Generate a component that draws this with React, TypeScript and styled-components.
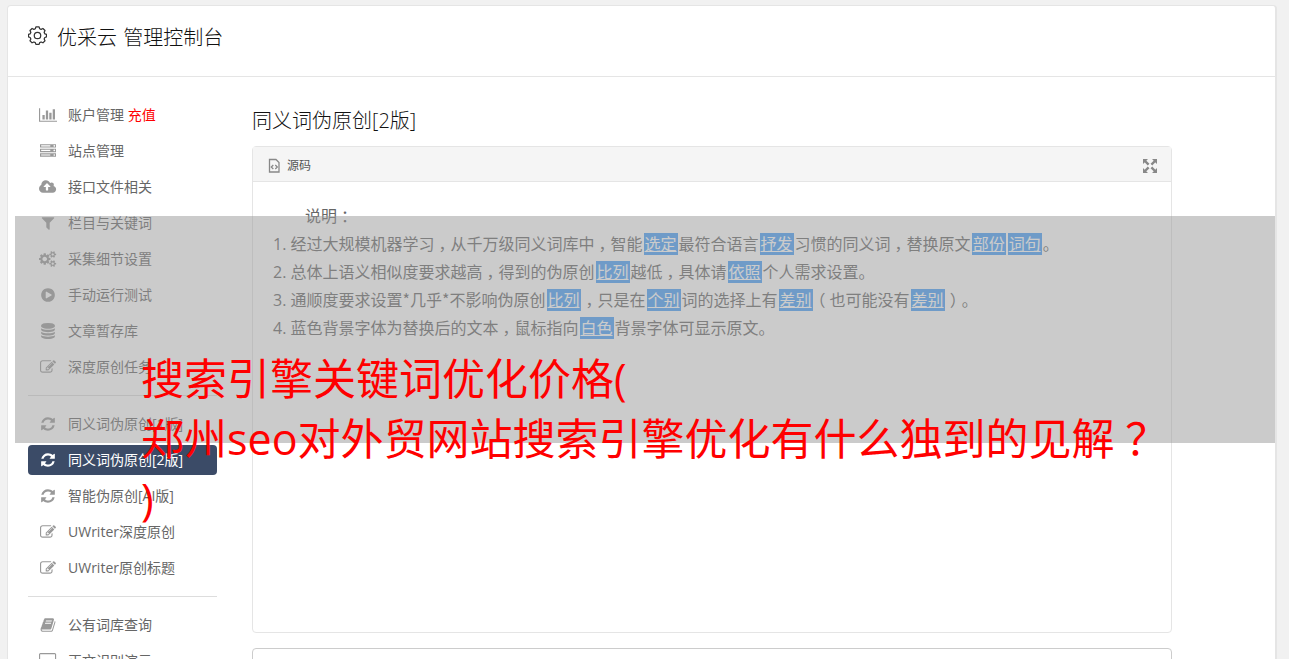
import type { ReactNode } from "react";
import styled, { createGlobalStyle } from "styled-components";

interface MenuEntry {
  label: string;
  icon: IconName;
  extra?: string;
  active?: boolean;
}

const icons = {
  chart: {
    width: 2048,
    d: "M640 896v512h-256v-512h256zm384-512v1024h-256v-1024h256zm1024 1152v128h-2048v-1536h128v1408h1920zm-640-896v768h-256v-768h256zm384-384v1152h-256v-1152h256z",
  },
  server: {
    width: 1792,
    d: "M128 1408h1024v-128h-1024v128zm0-512h1024v-128h-1024v128zm1568 448q0-40-28-68t-68-28-68 28-28 68 28 68 68 28 68-28 28-68zm-1568-960h1024v-128h-1024v128zm1568 448q0-40-28-68t-68-28-68 28-28 68 28 68 68 28 68-28 28-68zm0-512q0-40-28-68t-68-28-68 28-28 68 28 68 68 28 68-28 28-68zm96 832v384h-1792v-384h1792zm0-512v384h-1792v-384h1792zm0-512v384h-1792v-384h1792z",
  },
  cloud: {
    width: 1920,
    d: "M1280 864q0-14-9-23l-352-352q-9-9-23-9t-23 9l-351 351q-10 12-10 24 0 14 9 23t23 9h224v352q0 13 9.5 22.5t22.5 9.5h192q13 0 22.5-9.5t9.5-22.5v-352h224q13 0 22.5-9.5t9.5-22.5zm640 288q0 159-112.5 271.5t-271.5 112.5h-1088q-185 0-316.5-131.5t-131.5-316.5q0-130 70-240t188-165q-2-30-2-43 0-212 150-362t362-150q156 0 285.5 87t188.5 231q71-62 166-62 106 0 181 75t75 181q0 76-41 138 130 31 213.5 135.5t83.5 238.5z",
  },
  filter: {
    width: 1792,
    d: "M1595 295q17 41-14 70l-493 493v742q0 42-39 59-13 5-25 5-27 0-45-19l-256-256q-19-19-19-45v-486l-493-493q-31-29-14-70 17-39 59-39h1280q42 0 59 39z",
  },
  cogs: {
    width: 1920,
    d: "M896 896q0-106-75-181t-181-75-181 75-75 181 75 181 181 75 181-75 75-181zm768 512q0-52-38-90t-90-38-90 38-38 90q0 53 37.5 90.5t90.5 37.5 90.5-37.5 37.5-90.5zm0-1024q0-52-38-90t-90-38-90 38-38 90q0 53 37.5 90.5t90.5 37.5 90.5-37.5 37.5-90.5zm-384 421v185q0 10-7 19.5t-16 10.5l-155 24q-11 35-32 76 34 48 90 115 7 10 7 20 0 12-7 19-23 30-82.5 89.5t-78.5 59.5q-11 0-21-7l-115-90q-37 19-77 31-11 108-23 155-7 24-30 24h-186q-11 0-20-7.5t-10-17.5l-23-153q-34-10-75-31l-118 89q-7 7-20 7-11 0-21-8-144-133-144-160 0-9 7-19 10-14 41-53t47-61q-23-44-35-82l-152-24q-10-1-17-9.5t-7-19.5v-185q0-10 7-19.5t16-10.5l155-24q11-35 32-76-34-48-90-115-7-11-7-20 0-12 7-20 22-30 82-89t79-59q11 0 21 7l115 90q34-18 77-32 11-108 23-154 7-24 30-24h186q11 0 20 7.5t10 17.5l23 153q34 10 75 31l118-89q8-7 20-7 11 0 21 8 144 133 144 160 0 9-7 19-12 16-42 54t-45 60q23 48 34 82l152 23q10 2 17 10.5t7 19.5zm640 533v140q0 16-149 31-12 27-30 52 51 113 51 138 0 4-4 7-122 71-124 71-8 0-46-47t-52-68q-20 2-30 2t-30-2q-14 21-52 68t-46 47q-2 0-124-71-4-3-4-7 0-25 51-138-18-25-30-52-149-15-149-31v-140q0-16 149-31 13-29 30-52-51-113-51-138 0-4 4-7 4-2 35-20t59-34 30-16q8 0 46 46.5t52 67.5q20-2 30-2t30 2q51-71 92-112l6-2q4 0 124 70 4 3 4 7 0 25-51 138 17 23 30 52 149 15 149 31zm0-1024v140q0 16-149 31-12 27-30 52 51 113 51 138 0 4-4 7-122 71-124 71-8 0-46-47t-52-68q-20 2-30 2t-30-2q-14 21-52 68t-46 47q-2 0-124-71-4-3-4-7 0-25 51-138-18-25-30-52-149-15-149-31v-140q0-16 149-31 13-29 30-52-51-113-51-138 0-4 4-7 4-2 35-20t59-34 30-16q8 0 46 46.5t52 67.5q20-2 30-2t30 2q51-71 92-112l6-2q4 0 124 70 4 3 4 7 0 25-51 138 17 23 30 52 149 15 149 31z",
  },
  play: {
    width: 1792,
    d: "M896 128q209 0 385.5 103t279.5 279.5 103 385.5-103 385.5-279.5 279.5-385.5 103-385.5-103-279.5-279.5-103-385.5 103-385.5 279.5-279.5 385.5-103zm384 823q32-18 32-55t-32-55l-544-320q-31-19-64-1-32 19-32 56v640q0 37 32 56 16 8 32 8 17 0 32-9z",
  },
  database: {
    width: 1792,
    d: "M896 768q237 0 443-43t325-127v170q0 69-103 128t-280 93.5-385 34.5-385-34.5-280-93.5-103-128v-170q119 84 325 127t443 43zm0 768q237 0 443-43t325-127v170q0 69-103 128t-280 93.5-385 34.5-385-34.5-280-93.5-103-128v-170q119 84 325 127t443 43zm0-384q237 0 443-43t325-127v170q0 69-103 128t-280 93.5-385 34.5-385-34.5-280-93.5-103-128v-170q119 84 325 127t443 43zm0-1152q208 0 385 34.5t280 93.5 103 128v128q0 69-103 128t-280 93.5-385 34.5-385-34.5-280-93.5-103-128v-128q0-69 103-128t280-93.5 385-34.5z",
  },
  edit: {
    width: 1792,
    d: "M888 1184l116-116-152-152-116 116v56h96v96h56zm440-720q-16-16-33 1l-350 350q-17 17-1 33t33-1l350-350q17-17 1-33zm80 594v190q0 119-84.5 203.5t-203.5 84.5h-832q-119 0-203.5-84.5t-84.5-203.5v-832q0-119 84.5-203.5t203.5-84.5h832q63 0 117 25 15 7 18 23 3 17-9 29l-49 49q-14 14-32 8-23-6-45-6h-832q-66 0-113 47t-47 113v832q0 66 47 113t113 47h832q66 0 113-47t47-113v-126q0-13 9-22l64-64q15-15 35-7t20 29zm-96-738l288 288-672 672h-288v-288zm444 132l-92 92-288-288 92-92q28-28 68-28t68 28l152 152q28 28 28 68t-28 68z",
  },
  refresh: {
    width: 1792,
    d: "M1639 1056q0 5-1 7-64 268-268 434.5t-478 166.5q-146 0-282.5-55t-243.5-157l-129 129q-19 19-45 19t-45-19-19-45v-448q0-26 19-45t45-19h448q26 0 45 19t19 45-19 45l-137 137q71 66 161 102t187 36q134 0 250-65t186-179q11-17 53-117 8-23 30-23h192q13 0 22.5 9.5t9.5 22.5zm25-800v448q0 26-19 45t-45 19h-448q-26 0-45-19t-19-45 19-45l138-138q-148-137-349-137-134 0-250 65t-186 179q-11 17-53 117-8 23-30 23h-199q-13 0-22.5-9.5t-9.5-22.5v-7q65-268 270-434.5t480-166.5q146 0 284 55.5t245 156.5l130-129q19-19 45-19t45 19 19 45z",
  },
  book: {
    width: 1792,
    d: "M1703 478q40 57 18 129l-275 906q-19 64-76.5 107.5t-122.5 43.5h-923q-77 0-148.5-53.5t-99.5-131.5q-24-67-2-127 0-4 3-27t4-37q1-8-3-21.5t-3-19.5q2-11 8-21t16.5-23.5 16.5-23.5q23-38 45-91.5t30-91.5q3-10 .5-30t-.5-28q3-11 17-28t17-23q21-36 42-92t25-90q1-9-2.5-32t.5-28q4-13 22-30.5t22-22.5q19-26 42.5-84.5t27.5-96.5q1-8-3-25.5t-2-26.5q2-8 9-18t18-23 17-21q8-12 16.5-30.5t15-35 16-36 19.5-32 26.5-23.5 36-11.5 47.5 5.5l-1 3q38-9 51-9h761q74 0 114 56t18 130l-274 906q-36 119-71.5 153.5t-128.5 34.5h-869q-27 0-38 15-11 16-1 43 24 70 144 70h923q29 0 56-15.5t35-41.5l300-987q7-22 5-57 38 15 59 43zm-1064 2q-4 13 2 22.5t20 9.5h608q13 0 25.5-9.5t16.5-22.5l21-64q4-13-2-22.5t-20-9.5h-608q-13 0-25.5 9.5t-16.5 22.5zm-83 256q-4 13 2 22.5t20 9.5h608q13 0 25.5-9.5t16.5-22.5l21-64q4-13-2-22.5t-20-9.5h-608q-13 0-25.5 9.5t-16.5 22.5z",
  },
  desktop: {
    width: 1920,
    d: "M1792 992v-832q0-13-9.5-22.5t-22.5-9.5h-1600q-13 0-22.5 9.5t-9.5 22.5v832q0 13 9.5 22.5t22.5 9.5h1600q13 0 22.5-9.5t9.5-22.5zm128-832v1088q0 66-47 113t-113 47h-544q0 37 16 77.5t32 71 16 43.5q0 26-19 45t-45 19h-512q-26 0-45-19t-19-45q0-14 16-44t32-70 16-78h-544q-66 0-113-47t-47-113v-1088q0-66 47-113t113-47h1600q66 0 113 47t47 113z",
  },
};

type IconName = keyof typeof icons;

const menu: MenuEntry[][] = [
  [
    { label: "账户管理", icon: "chart", extra: "充值" },
    { label: "站点管理", icon: "server" },
    { label: "接口文件相关", icon: "cloud" },
    { label: "栏目与关键词", icon: "filter" },
    { label: "采集细节设置", icon: "cogs" },
    { label: "手动运行测试", icon: "play" },
    { label: "文章暂存库", icon: "database" },
    { label: "深度原创任务", icon: "edit" },
  ],
  [
    { label: "同义词伪原创[1版]", icon: "refresh" },
    { label: "同义词伪原创[2版]", icon: "refresh", active: true },
    { label: "智能伪原创[AI版]", icon: "refresh" },
    { label: "UWriter深度原创", icon: "edit" },
    { label: "UWriter原创标题", icon: "edit" },
  ],
  [
    { label: "公有词库查询", icon: "book" },
    { label: "正文识别演示", icon: "desktop" },
  ],
];

function MenuIcon({ name }: { name: IconName }) {
  const { width, d } = icons[name];
  return (
    <svg
      width={(width / 1792) * 16}
      height="16"
      viewBox={`0 0 ${width} 1792`}
      fill="currentColor"
    >
      <path d={d} />
    </svg>
  );
}

function GearIcon() {
  return (
    <svg width="19" height="19" viewBox="0 0 20 20" fill="none" stroke="#333">
      <path
        strokeWidth="1.3"
        strokeLinejoin="round"
        d="M8.3 1h3.4l.6 1.900 1.500.6 1.900-.9 2.200 2.200-.9 1.900.7 1.500 1.800.6v2.700l-1.800.6-.7 1.600.9 1.800-2.200 2.200-1.900-.9-1.500.7-.6 1.800H8.300l-.6-1.800-1.500-.7-1.900.9-2.200-2.200.9-1.800-.7-1.600-1.800-.6V8.800l1.800-.6.7-1.500-.9-1.900 2.200-2.200 1.900.9 1.500-.6z"
      />
      <circle cx="10" cy="10" r="3.400" strokeWidth="1.300" />
    </svg>
  );
}

function SourceIcon() {
  return (
    <svg width="12" height="15" viewBox="0 0 12 15" fill="none" stroke="#888">
      <path d="M1.500 1.500h6.500l3 3v9.500H1.500z" strokeWidth="1.300" />
      <path d="M5.300 7l-2 2 2 2M7.300 7l2 2-2 2" strokeWidth="1.300" />
    </svg>
  );
}

function ExpandIcon() {
  return (
    <svg width="14" height="14" viewBox="0 0 14 14" fill="#888" stroke="#888">
      <path
        stroke="none"
        d="M0 0h5L0 5zM14 0v5L9 0zM0 14V9l5 5zM14 14H9l5-5z"
      />
      <path
        strokeWidth="2.400"
        d="M2 2l3.600 3.600M12 2L8.400 5.600M2 12l3.600-3.600M12 12L8.400 8.400"
      />
    </svg>
  );
}

function Word({ children }: { children: ReactNode }) {
  return <Replaced href="#">{children}</Replaced>;
}

export default function App() {
  return (
    <>
      <GlobalStyle />
      <Page>
        <Header>
          <GearIcon />
          <Title>优采云 管理控制台</Title>
        </Header>
        <Body>
          <Sidebar>
            {menu.map((group, index) => (
              <MenuGroup key={index}>
                {group.map((entry) => (
                  <MenuItem key={entry.label} $active={entry.active}>
                    <IconSlot>
                      <MenuIcon name={entry.icon} />
                    </IconSlot>
                    <Label>
                      {entry.label} {entry.extra && <Extra>{entry.extra}</Extra>}
                    </Label>
                  </MenuItem>
                ))}
              </MenuGroup>
            ))}
          </Sidebar>
          <Main>
            <Heading>同义词伪原创[2版]</Heading>
            <Editor>
              <Toolbar>
                <SourceButton>
                  <SourceIcon />
                  <Label>源码</Label>
                </SourceButton>
                <ExpandIcon />
              </Toolbar>
              <Content>
                <Intro>
                  说明<Mark $shift={0.25}>：</Mark>
                </Intro>
                <Line>
                  1. 经过大规模机器学习<Mark $shift={0.25}>，</Mark>
                  从千万级同义词库中<Mark $shift={0.25}>，</Mark>智能
                  <Word>选定</Word>
                  最符合语言<Word>抒发</Word>习惯的同义词
                  <Mark $shift={0.25}>，</Mark>替换原文
                  <Word>部份</Word>
                  <Word>词句</Word>。
                </Line>
                <Line>
                  2. 总体上语义相似度要求越高<Mark $shift={0.25}>，</Mark>
                  得到的伪原创<Word>比列</Word>
                  越低<Mark $shift={0.25}>，</Mark>具体请<Word>依照</Word>
                  个人需求设置。
                </Line>
                <Line>
                  3. 通顺度要求设置<Star>*</Star>几乎<Star>*</Star>
                  不影响伪原创<Word>比列</Word>
                  <Mark $shift={0.25}>，</Mark>只是在<Word>个别</Word>
                  词的选择上有<Word>差别</Word>
                  <Mark $shift={-0.25}>（</Mark>也可能没有<Word>差别</Word>
                  <Mark $shift={0.25}>）</Mark>。
                </Line>
                <Line>
                  4. 蓝色背景字体为替换后的文本
                  <Mark $shift={0.25}>，</Mark>鼠标指向<Word>白色</Word>
                  背景字体可显示原文。
                </Line>
              </Content>
            </Editor>
            <Output />
          </Main>
        </Body>
        <Shade />
        <Caption>
          搜索引擎关键词优化价格(
          <br />
          郑州seo对外贸网站搜索引擎优化有什么独到的见解
          <Mark $shift={0.25}>？</Mark>
          <br />)
        </Caption>
      </Page>
    </>
  );
}

const GlobalStyle = createGlobalStyle`
  * {
    box-sizing: border-box;
  }

  body {
    margin: 0;
    height: 659px;
    overflow: hidden;
    background: #f1f1f1;
    color: #333;
    font-family: "Open Sans", "Noto Sans CJK SC", sans-serif;
    font-weight: 400;
  }
`;

const Page = styled.div`
  position: relative;
  width: 1270px;
  height: 654px;
  margin: 5px 0 0 7px;
  overflow: hidden;
  background: #fff;
  border: 1px solid #e5e5e5;
  border-right-width: 2px;
  border-bottom: none;
  border-radius: 4px 4px 0 0;
`;

const Header = styled.header`
  display: flex;
  align-items: flex-start;
  gap: 10px;
  height: 71px;
  padding: 20px 0 0 20px;
  border-bottom: 1px solid #e5e5e5;
`;

const Title = styled.h1`
  margin: -3px 0 0;
  font-size: 20px;
  font-weight: 300;
  line-height: 30px;
  word-spacing: 1px;
  color: #111;
`;

const Body = styled.div`
  display: flex;
  gap: 35px;
  padding: 23px 0 0 20px;
`;

const Sidebar = styled.nav`
  width: 189px;
`;

const MenuGroup = styled.div`
  display: flex;
  flex-direction: column;
  gap: 6px;

  & + & {
    margin-top: 13px;
    padding-top: 13px;
    border-top: 1px solid #ddd;
  }
`;

const MenuItem = styled.a<{ $active?: boolean }>`
  display: flex;
  align-items: center;
  height: 30px;
  padding-left: 10px;
  border-radius: 4px;
  background: ${({ $active }) => ($active ? "#3b4b67" : "transparent")};
  color: ${({ $active }) => ($active ? "#fff" : "#666")};
  font-size: 14px;
  white-space: nowrap;

  svg {
    color: ${({ $active }) => ($active ? "#fff" : "#999")};
  }
`;

const IconSlot = styled.span`
  display: flex;
  justify-content: center;
  width: 20px;
  margin-right: 10px;
`;

const Label = styled.span`
  padding-bottom: 2px;
`;

const Extra = styled.span`
  color: #f00;
`;

const Main = styled.main`
  width: 920px;
`;

const Heading = styled.h2`
  margin: 5px 0 10px;
  font-size: 20px;
  font-weight: 300;
  line-height: 31px;
  color: #111;
`;

const Editor = styled.section`
  height: 487px;
  border: 1px solid #e5e5e5;
  border-radius: 4px;
`;

const Toolbar = styled.div`
  display: flex;
  align-items: center;
  justify-content: space-between;
  height: 35px;
  padding: 3px 14px 0 15px;
  background: #f5f5f5;
  border-bottom: 1px solid #e5e5e5;
`;

const SourceButton = styled.span`
  display: flex;
  align-items: center;
  gap: 7px;
  color: #555;
  font-size: 12px;
`;

const Content = styled.div`
  padding: 20px;
  color: #666;
  font-size: 16px;
  line-height: 28px;
`;

const Intro = styled.p`
  margin: 0;
  text-indent: 2em;
`;

const Line = styled.p`
  margin: 0;
  white-space: nowrap;
`;

// full-width punctuation, moved toward the middle of its cell
const Mark = styled.span<{ $shift: number }>`
  display: inline-block;
  width: 1em;
  text-indent: ${({ $shift }) => $shift}em;
`;

const Star = styled.span`
  font-family: "Noto Sans CJK SC", sans-serif;
  line-height: 1;
`;

const Replaced = styled.a`
  margin: 0 1px;
  padding: 0 1px;
  background: #479ff9;
  color: #fff;
  text-decoration: underline;
`;

const Output = styled.div`
  height: 60px;
  margin-top: 15px;
  border: 1px solid #ccc;
  border-radius: 4px;
`;

const Shade = styled.div`
  position: absolute;
  top: 210px;
  left: 7px;
  width: 1260px;
  height: 227px;
  background: rgba(151, 151, 151, 0.5);
`;

const Caption = styled.div`
  position: absolute;
  top: 343px;
  left: 133px;
  color: #f00;
  font-size: 43px;
  font-weight: 400;
  line-height: 60px;
  white-space: nowrap;
`;
